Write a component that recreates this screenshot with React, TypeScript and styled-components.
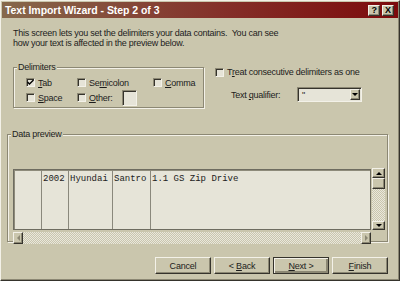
import styled, { createGlobalStyle, css } from "styled-components";

const FACE = "#cac6ad";
const LIGHT = "#f3f1e8";
const SHADOW = "#8c8874";
const DARK = "#35332c";
const FIELD = "#e6e4d8";

const GlobalStyle = createGlobalStyle`
  html, body { margin: 0; padding: 0; background: ${FACE}; }
  body { font-family: "Liberation Sans", Arial, sans-serif; }
`;

const raised = css`
  box-sizing: border-box;
  background: ${FACE};
  border: 1px solid;
  border-color: ${LIGHT} ${DARK} ${DARK} ${LIGHT};
  box-shadow: inset -1px -1px 0 ${SHADOW};
`;

const sunken = css`
  box-sizing: border-box;
  background: ${FIELD};
  border: 1px solid;
  border-color: ${SHADOW} ${LIGHT} ${LIGHT} ${SHADOW};
  box-shadow: inset 1px 1px 0 ${DARK};
`;

const Window = styled.div`
  box-sizing: border-box;
  width: 400px;
  height: 281px;
  padding: 1px;
  background: ${FACE};
  border: 1px solid;
  border-color: ${LIGHT} ${DARK} ${DARK} ${LIGHT};
  box-shadow: inset -1px -1px 0 ${SHADOW};
  display: flex;
  flex-direction: column;
  font-size: 9px;
  letter-spacing: -0.25px;
  color: #1c1c1c;
`;

const TitleBar = styled.div`
  height: 16px;
  display: flex;
  align-items: center;
  padding: 0 4px 0 3px;
  background: linear-gradient(to right, #86694c, #84302a 55%, #7c0a0c);
`;

const Title = styled.span`
  flex: 1;
  color: #fff;
  font-weight: bold;
  font-size: 10.5px;
  letter-spacing: -0.05px;
`;

const TitleButton = styled.span<{ $gap?: boolean }>`
  ${raised};
  width: 12px;
  height: 11px;
  margin-left: ${(p) => (p.$gap ? 2 : 0)}px;
  display: flex;
  align-items: center;
  justify-content: center;
  font-weight: bold;
  font-size: 9px;
  line-height: 1;
  color: #000;
`;

const Body = styled.div`
  flex: 1;
  display: flex;
  flex-direction: column;
  padding: 0 10px 0 5px;
`;

const Intro = styled.p`
  margin: 10px 0 0 6px;
  line-height: 10px;
`;

const OptionsRow = styled.div`
  display: flex;
  align-items: flex-start;
  gap: 11px;
  margin: 19px 0 0 6px;
`;

const Group = styled.div<{ $w: number; $h: number; $top?: number }>`
  position: relative;
  box-sizing: border-box;
  width: ${(p) => p.$w}px;
  height: ${(p) => p.$h}px;
  margin-top: ${(p) => p.$top ?? 0}px;
  border: 1px solid ${SHADOW};
  box-shadow: inset 1px 1px 0 ${LIGHT}, 1px 1px 0 ${LIGHT};
`;

const GroupLabel = styled.span`
  position: absolute;
  top: -6px;
  left: 3px;
  padding: 0 1px;
  line-height: 11px;
  background: ${FACE};
`;

const DelimGrid = styled.div`
  display: grid;
  grid-template-columns: 51px 76px auto;
  grid-auto-rows: 15px;
  padding: 7px 0 0 12px;
`;

const Option = styled.label`
  display: flex;
  align-items: center;
  gap: 3px;
  line-height: 10px;
  white-space: nowrap;
`;

const Box = styled.span`
  ${sunken};
  width: 9px;
  height: 9px;
  flex: none;
  display: flex;
  align-items: center;
  justify-content: center;
`;

const SmallField = styled.span`
  ${sunken};
  width: 15px;
  height: 16px;
  margin-left: 6px;
`;

const Side = styled.div`
  display: flex;
  flex-direction: column;
`;

const QualifierRow = styled.div`
  display: flex;
  align-items: center;
  height: 15px;
  margin-top: 10px;
  padding-left: 16px;
`;

const QualifierLabel = styled.span`
  width: 66px;
`;

const Select = styled.div`
  ${sunken};
  width: 65px;
  height: 15px;
  display: flex;
  align-items: center;
  padding: 0 1px 0 4px;
`;

const DropButton = styled.span`
  ${raised};
  margin-left: auto;
  width: 10px;
  height: 11px;
  display: flex;
  align-items: center;
  justify-content: center;
`;

const PreviewGrid = styled.div`
  display: grid;
  grid-template-columns: 358px 13px;
  grid-template-rows: 61px 12px;
  column-gap: 1px;
  row-gap: 2px;
  padding: 34px 0 0 5px;
`;

const PreviewBox = styled.div`
  box-sizing: border-box;
  display: flex;
  background: ${FIELD};
  border: 1px solid #6e6c60;
  box-shadow: inset 1px 1px 0 #8e8b7b;
  font-family: "Liberation Mono", "Courier New", monospace;
  font-size: 9px;
  letter-spacing: 0;
`;

const Cell = styled.div<{ $w?: number; $first?: boolean }>`
  box-sizing: border-box;
  ${(p) => (p.$w ? `width: ${p.$w}px;` : "flex: 1;")}
  border-left: ${(p) => (p.$first ? "none" : "1px solid #8a887c")};
  padding: 4px 0 0 1px;
  line-height: 10px;
  white-space: pre;
`;

const track = css`
  background: repeating-conic-gradient(#e9e7dc 0 25%, ${FACE} 0 50%) 0 0 / 2px 2px;
`;

const VScroll = styled.div`
  ${track};
  display: flex;
  flex-direction: column;
  margin-top: -1px;
`;

const HScroll = styled.div`
  ${track};
  display: flex;
`;

const ScrollButton = styled.span<{ $w: number; $h: number }>`
  ${raised};
  width: ${(p) => p.$w}px;
  height: ${(p) => p.$h}px;
  flex: none;
  display: flex;
  align-items: center;
  justify-content: center;
`;

const Spacer = styled.span`
  flex: 1;
`;

const ButtonRow = styled.div`
  display: flex;
  justify-content: flex-end;
  gap: 3px;
  margin-top: 15px;
`;

const Button = styled.button<{ $default?: boolean }>`
  ${raised};
  width: 56px;
  height: 17px;
  padding: 0;
  font-family: inherit;
  font-size: 9px;
  letter-spacing: -0.2px;
  color: #1c1c1c;
  ${(p) =>
    p.$default &&
    css`
      border-color: ${DARK};
      box-shadow: inset 1px 1px 0 ${LIGHT}, inset -2px -2px 0 ${SHADOW};
    `}
`;

const U = styled.span`
  text-decoration: underline;
`;

const Arrow = ({ dir, color = "#000" }: { dir: "up" | "down" | "left" | "right"; color?: string }) => {
  const pts = {
    up: "0,3 3,0 6,3",
    down: "0,0 6,0 3,3",
    left: "3,0 3,6 0,3",
    right: "0,0 0,6 3,3",
  }[dir];
  const vertical = dir === "up" || dir === "down";
  const w = vertical ? 6 : 3;
  const h = vertical ? 3 : 6;
  return (
    <svg width={w} height={h} viewBox={`0 0 ${w} ${h}`}>
      <polygon points={pts} fill={color} />
    </svg>
  );
};

const Check = ({ checked }: { checked?: boolean }) => (
  <Box>
    {checked && (
      <svg width="7" height="7" viewBox="0 0 7 7">
        <path d="M0.5 3 L2.5 5 L6.5 1" stroke="#000" strokeWidth="1.4" fill="none" />
      </svg>
    )}
  </Box>
);

const App = () => {
  return (
    <>
      <GlobalStyle />
      <Window>
        <TitleBar>
          <Title>Text Import Wizard - Step 2 of 3</Title>
          <TitleButton>?</TitleButton>
          <TitleButton $gap>X</TitleButton>
        </TitleBar>
        <Body>
          <Intro>
            This screen lets you set the delimiters your data contains.&nbsp; You can see
            <br />
            how your text is affected in the preview below.
          </Intro>

          <OptionsRow>
            <Group $w={191} $h={41}>
              <GroupLabel>Delimiters</GroupLabel>
              <DelimGrid>
                <Option>
                  <Check checked />
                  <span>
                    <U>T</U>ab
                  </span>
                </Option>
                <Option>
                  <Check />
                  <span>
                    Se<U>m</U>icolon
                  </span>
                </Option>
                <Option>
                  <Check />
                  <span>
                    <U>C</U>omma
                  </span>
                </Option>
                <Option>
                  <Check />
                  <span>
                    <U>S</U>pace
                  </span>
                </Option>
                <Option>
                  <Check />
                  <span>
                    <U>O</U>ther:
                  </span>
                  <SmallField />
                </Option>
              </DelimGrid>
            </Group>

            <Side>
              <Option>
                <Check />
                <span>
                  T<U>r</U>eat consecutive delimiters as one
                </span>
              </Option>
              <QualifierRow>
                <QualifierLabel>
                  Text <U>q</U>ualifier:
                </QualifierLabel>
                <Select>
                  <span>"</span>
                  <DropButton>
                    <Arrow dir="down" />
                  </DropButton>
                </Select>
              </QualifierRow>
            </Side>
          </OptionsRow>

          <Group $w={381} $h={108} $top={26}>
            <GroupLabel>Data preview</GroupLabel>
            <PreviewGrid>
              <PreviewBox>
                <Cell $w={27} $first />
                <Cell $w={27}>2002</Cell>
                <Cell $w={44}>Hyundai</Cell>
                <Cell $w={38}>Santro</Cell>
                <Cell>1.1 GS Zip Drive</Cell>
              </PreviewBox>
              <VScroll>
                <ScrollButton $w={13} $h={10}>
                  <Arrow dir="up" />
                </ScrollButton>
                <ScrollButton $w={13} $h={11} />
                <Spacer />
                <ScrollButton $w={13} $h={9}>
                  <Arrow dir="down" />
                </ScrollButton>
              </VScroll>
              <HScroll>
                <ScrollButton $w={10} $h={12}>
                  <Arrow dir="left" color={SHADOW} />
                </ScrollButton>
                <Spacer />
                <ScrollButton $w={10} $h={12}>
                  <Arrow dir="right" color={SHADOW} />
                </ScrollButton>
              </HScroll>
            </PreviewGrid>
          </Group>

          <ButtonRow>
            <Button>Cancel</Button>
            <Button>
              &lt; <U>B</U>ack
            </Button>
            <Button $default>
              <U>N</U>ext &gt;
            </Button>
            <Button>
              <U>F</U>inish
            </Button>
          </ButtonRow>
        </Body>
      </Window>
    </>
  );
};

export default App;
